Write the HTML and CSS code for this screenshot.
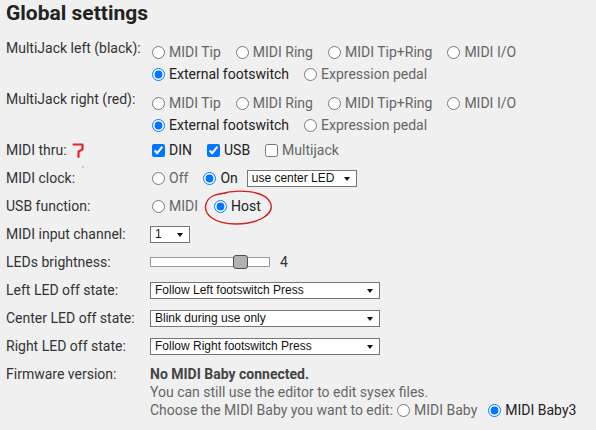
FILE: index.html
```html
<!DOCTYPE html>
<html lang="en">
<head>
    <meta charset="UTF-8">
    <meta name="viewport" content="width=device-width, initial-scale=1.0">
    <title>Global settings</title>
    <link rel="stylesheet" href="styles.css">
</head>
<body>
    <h2 class="title">Global settings</h2>

    <div class="settings">
        <div class="row multi">
            <div class="label">MultiJack left (black):</div>
            <div class="value">
                <div class="line">
                    <label class="opt"><input type="radio" name="mjLeft"><span>MIDI Tip</span></label>
                    <label class="opt"><input type="radio" name="mjLeft"><span>MIDI Ring</span></label>
                    <label class="opt"><input type="radio" name="mjLeft"><span>MIDI Tip+Ring</span></label>
                    <label class="opt"><input type="radio" name="mjLeft"><span>MIDI I/O</span></label>
                </div>
                <div class="line">
                    <label class="opt"><input type="radio" name="mjLeft" checked><span>External footswitch</span></label>
                    <label class="opt"><input type="radio" name="mjLeft"><span>Expression pedal</span></label>
                </div>
            </div>
        </div>

        <div class="row multi">
            <div class="label">MultiJack right (red):</div>
            <div class="value">
                <div class="line">
                    <label class="opt"><input type="radio" name="mjRight"><span>MIDI Tip</span></label>
                    <label class="opt"><input type="radio" name="mjRight"><span>MIDI Ring</span></label>
                    <label class="opt"><input type="radio" name="mjRight"><span>MIDI Tip+Ring</span></label>
                    <label class="opt"><input type="radio" name="mjRight"><span>MIDI I/O</span></label>
                </div>
                <div class="line">
                    <label class="opt"><input type="radio" name="mjRight" checked><span>External footswitch</span></label>
                    <label class="opt"><input type="radio" name="mjRight"><span>Expression pedal</span></label>
                </div>
            </div>
        </div>

        <div class="row">
            <div class="label">MIDI thru:</div>
            <div class="value">
                <div class="line">
                    <label class="opt"><input type="checkbox" checked><span>DIN</span></label>
                    <label class="opt"><input type="checkbox" checked><span>USB</span></label>
                    <label class="opt"><input type="checkbox"><span>Multijack</span></label>
                </div>
            </div>
        </div>

        <div class="row">
            <div class="label">MIDI clock:</div>
            <div class="value">
                <div class="line">
                    <label class="opt"><input type="radio" name="clock"><span>Off</span></label>
                    <label class="opt tight"><input type="radio" name="clock" checked><span>On</span></label>
                    <span class="select"><select class="sel-clock"><option>use center LED</option></select></span>
                </div>
            </div>
        </div>

        <div class="row">
            <div class="label">USB function:</div>
            <div class="value">
                <div class="line">
                    <label class="opt wide"><input type="radio" name="usb"><span>MIDI</span></label>
                    <label class="opt"><input type="radio" name="usb" checked><span>Host</span></label>
                </div>
            </div>
        </div>

        <div class="row">
            <div class="label">MIDI input channel:</div>
            <div class="value">
                <div class="line">
                    <span class="select"><select class="sel-channel"><option>1</option></select></span>
                </div>
            </div>
        </div>

        <div class="row">
            <div class="label">LEDs brightness:</div>
            <div class="value">
                <div class="line">
                    <input class="slider" type="range" min="0" max="5" value="4">
                    <span class="slider-value">4</span>
                </div>
            </div>
        </div>

        <div class="row">
            <div class="label">Left LED off state:</div>
            <div class="value">
                <div class="line">
                    <span class="select"><select class="sel-led"><option>Follow Left footswitch Press</option></select></span>
                </div>
            </div>
        </div>

        <div class="row">
            <div class="label">Center LED off state:</div>
            <div class="value">
                <div class="line">
                    <span class="select"><select class="sel-led"><option>Blink during use only</option></select></span>
                </div>
            </div>
        </div>

        <div class="row">
            <div class="label">Right LED off state:</div>
            <div class="value">
                <div class="line">
                    <span class="select"><select class="sel-led"><option>Follow Right footswitch Press</option></select></span>
                </div>
            </div>
        </div>

        <div class="row firmware">
            <div class="label">Firmware version:</div>
            <div class="value">
                <div class="fw-line fw-status">No MIDI Baby connected.</div>
                <div class="fw-line">You can still use the editor to edit sysex files.</div>
                <div class="fw-line fw-choose">
                    <span class="fw-ask">Choose the MIDI Baby you want to edit:</span>
                    <label class="opt close"><input type="radio" name="model"><span>MIDI Baby</span></label>
                    <label class="opt"><input type="radio" name="model" checked><span>MIDI Baby3</span></label>
                </div>
            </div>
        </div>
    </div>

    <!-- red pen marks drawn on top of the form -->
    <svg class="marks" width="596" height="430" viewBox="0 0 596 430">
        <path d="M73.5 144.5 H82.5 V149.5 L78.5 151.5 V157" fill="none" stroke="#e32626" stroke-width="2.2" stroke-linecap="round" stroke-linejoin="round"/>
        <circle cx="83" cy="167" r="0.9" fill="#e9a46a"/>
        <path d="M220 194 C236 189 264 190 270 202 C276 214 258 224 236 224 C214 224 203 214 206 204 C208 197 214 194 226 193" fill="none" stroke="#d41c1c" stroke-width="1.4" stroke-linecap="round"/>
    </svg>
</body>
</html>
```

FILE: styles.css
```css
body {
    margin: 0;
    padding: 0 6px;
    background: #f0f0f0;
    font-family: Roboto, "Noto Sans", sans-serif;
    font-size: 14px;
    color: #333;
}

.title {
    margin: 0 0 8px;
    font-size: 21px;
    line-height: 26px;
    font-weight: bold;
    color: #222;
}

.row {
    display: flex;
    height: 28px;
}
.row.multi {
    height: 51px;
}
.row.firmware {
    height: auto;
}

.label {
    width: 144px;
    flex: none;
    padding-top: 4px;
    line-height: 20px;
}

.value {
    padding-top: 4px;
}
.multi .value {
    padding-top: 7px;
}

.line {
    display: flex;
    align-items: center;
    height: 20px;
}
.multi .line {
    height: 22px;
}

/* radio / checkbox with its text */
.opt {
    display: flex;
    align-items: center;
    margin-right: 13px;
    color: #666;
}
.opt input {
    margin: 0 4px 0 2px;
}
.opt input:checked + span {
    color: #222;
}
.opt.tight {
    margin-right: 9px;
}
.opt.wide {
    margin-right: 14px;
}
.opt.close {
    margin-right: 9px;
}

/* flat select with a small black arrow */
.select {
    position: relative;
    display: inline-block;
    height: 17px;
}
.select select {
    appearance: none;
    -webkit-appearance: none;
    display: block;
    height: 17px;
    margin: 0;
    padding: 0 0 0 4px;
    border: 1px solid #767676;
    border-radius: 0;
    background: #fff;
    color: #111;
    font-family: "Liberation Sans", Arial, sans-serif;
    font-size: 12px;
}
.select::after {
    content: "";
    position: absolute;
    right: 7px;
    top: 7px;
    border-top: 4px solid #111;
    border-left: 3.5px solid transparent;
    border-right: 3.5px solid transparent;
    pointer-events: none;
}
.sel-clock {
    width: 110px;
}
.sel-channel {
    width: 40px;
}
.sel-led {
    width: 230px;
}

/* brightness slider */
.slider {
    -webkit-appearance: none;
    appearance: none;
    width: 120px;
    height: 16px;
    margin: 0;
    background: transparent;
}
.slider::-webkit-slider-runnable-track {
    box-sizing: border-box;
    height: 10px;
    background: #fff;
    border: 1px solid #9a9a9a;
}
.slider::-webkit-slider-thumb {
    -webkit-appearance: none;
    box-sizing: border-box;
    width: 15px;
    height: 14px;
    margin-top: -3px;
    background: #b2b2b2;
    border: 1px solid #4e4e4e;
    border-radius: 3px;
}
.slider-value {
    margin-left: 10px;
    color: #333;
}

/* firmware block */
.firmware .value {
    padding-top: 5px;
}
.fw-line {
    line-height: 18px;
    color: #666;
}
.fw-status {
    font-weight: bold;
    color: #444;
}
.fw-choose {
    display: flex;
    align-items: center;
    height: 18px;
}
.fw-ask {
    margin-right: 2px;
}

.marks {
    position: absolute;
    top: 0;
    left: 0;
    pointer-events: none;
}
```
